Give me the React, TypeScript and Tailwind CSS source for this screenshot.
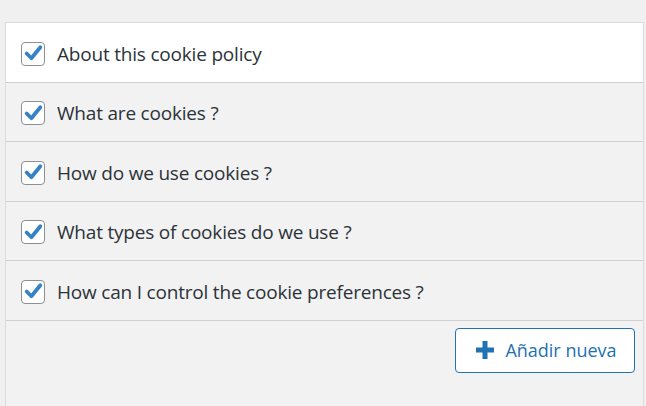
import React from "react";

const items = [
  "About this cookie policy",
  "What are cookies ?",
  "How do we use cookies ?",
  "What types of cookies do we use ?",
  "How can I control the cookie preferences ?",
];

function Check() {
  return (
    <span className="flex h-6 w-6 shrink-0 items-center justify-center rounded-[4px] border border-[#8c8f94] bg-white">
      <svg viewBox="0 0 20 20" className="h-[21px] w-[21px]">
        <path d="M3.5 10 L8 14.5 L16.5 4" fill="none" stroke="#3582c4" strokeWidth="3.6" strokeLinecap="round" strokeLinejoin="round" />
      </svg>
    </span>
  );
}

export default function App() {
  return (
    <div className="h-[406px] w-[646px] overflow-hidden bg-[#f0f0f1] pl-[5px] pr-[2px] pt-[22px]" style={{ fontFamily: "'Open Sans', 'Noto Sans', sans-serif" }}>
      <div className="h-[400px] border border-[#dcdcde] bg-[#f2f2f2]">
        {items.map((t, i) => (
          <div
            key={i}
            className={`flex h-[59.5px] items-center gap-3 border-b border-[#d0d0d0] pl-[15px] pt-[3px] ${i === 0 ? "bg-white" : "bg-[#f2f2f2]"}`}
          >
            <Check />
            <span className="text-[19px] tracking-[-0.2px] text-[#2c3338]">{t}</span>
          </div>
        ))}
        <div className="flex justify-end pr-[8px] pt-[7px]">
          <button className="flex h-[45px] w-[180px] items-center justify-center gap-[10px] rounded-[4px] border border-[#2271b1] bg-white pl-[2px] text-[18px] text-[#2271b1]">
            <svg viewBox="0 0 20 20" className="h-[20px] w-[20px]">
              <path d="M10 1 V19 M1 10 H19" stroke="#2271b1" strokeWidth="5" />
            </svg>
            Añadir nueva
          </button>
        </div>
      </div>
    </div>
  );
}
